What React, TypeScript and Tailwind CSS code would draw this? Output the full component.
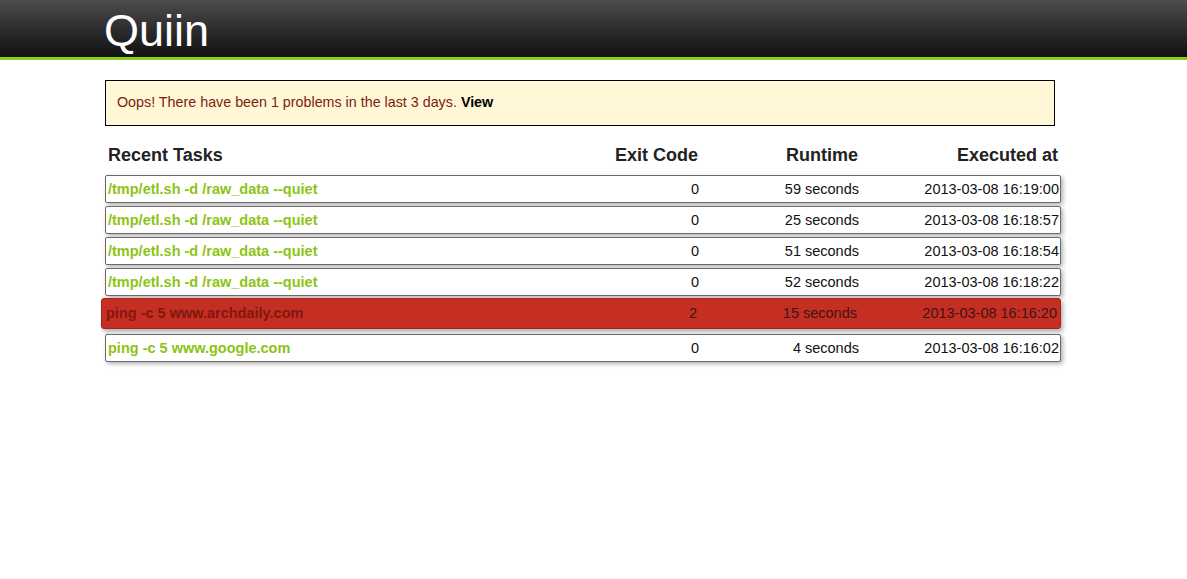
const tasks = [
  { cmd: '/tmp/etl.sh -d /raw_data --quiet', code: 0, runtime: '59 seconds', at: '2013-03-08 16:19:00' },
  { cmd: '/tmp/etl.sh -d /raw_data --quiet', code: 0, runtime: '25 seconds', at: '2013-03-08 16:18:57' },
  { cmd: '/tmp/etl.sh -d /raw_data --quiet', code: 0, runtime: '51 seconds', at: '2013-03-08 16:18:54' },
  { cmd: '/tmp/etl.sh -d /raw_data --quiet', code: 0, runtime: '52 seconds', at: '2013-03-08 16:18:22' },
  { cmd: 'ping -c 5 www.archdaily.com', code: 2, runtime: '15 seconds', at: '2013-03-08 16:16:20' },
  { cmd: 'ping -c 5 www.google.com', code: 0, runtime: '4 seconds', at: '2013-03-08 16:16:02' },
]

const cols = 'grid grid-cols-[1fr_130px_160px_200px] items-center'

export default function App() {
  return (
    <div className="min-h-[579px] bg-white font-['Liberation_Sans',Arial,sans-serif]">
      <header className="h-[60px] border-b-[3px] border-[#8fcb14] bg-gradient-to-b from-[#4d4d4d] to-[#121212] pl-[104px]">
        <h1 className="m-0 pt-[5px] text-[45px] leading-[52px] font-normal text-white">Quiin</h1>
      </header>

      <main className="pl-[105px]">
        <div className="mt-[20px] flex h-[46px] w-[950px] items-center border border-black bg-[#fff7d7] pl-[11px] text-[14.3px] text-[#7d1d0c]">
          <span>
            Oops! There have been 1 problems in the last 3 days.{' '}
            <a className="font-bold text-black">View</a>
          </span>
        </div>

        <div className={`${cols} mt-[19px] h-[20px] w-[956px] pr-[3px] pl-[3px] text-[18px] leading-[20px] font-bold text-[#222]`}>
          <span>Recent Tasks</span>
          <span className="text-right">Exit Code</span>
          <span className="text-right">Runtime</span>
          <span className="text-right">Executed at</span>
        </div>

        <div className="mt-[10px] flex w-[956px] flex-col">
          {tasks.map((t, i) => {
            const failed = t.code !== 0
            return (
              <div
                key={i}
                className={
                  failed
                    ? `${cols} mt-[2px] mb-[2px] ml-[-4px] h-[31px] w-[960px] rounded-[3px] border border-[#a3241a] bg-[#c52e23] pr-[3px] pl-[4px] text-[14.5px] text-[#3c1612] shadow-[2px_3px_4px_rgba(0,0,0,0.3)]`
                    : `${cols} mt-[3px] h-[28px] rounded-[2px] border border-[#6a6a6a] bg-white pt-[1px] pr-[1px] pl-[2px] text-[14.5px] text-[#111] shadow-[2px_2px_4px_rgba(0,0,0,0.3)] first:mt-0`
                }
              >
                <span className={failed ? 'font-bold text-[#80180f]' : 'font-bold text-[#8cc414]'}>{t.cmd}</span>
                <span className="text-right">{t.code}</span>
                <span className="text-right">{t.runtime}</span>
                <span className="text-right">{t.at}</span>
              </div>
            )
          })}
        </div>
      </main>
    </div>
  )
}
